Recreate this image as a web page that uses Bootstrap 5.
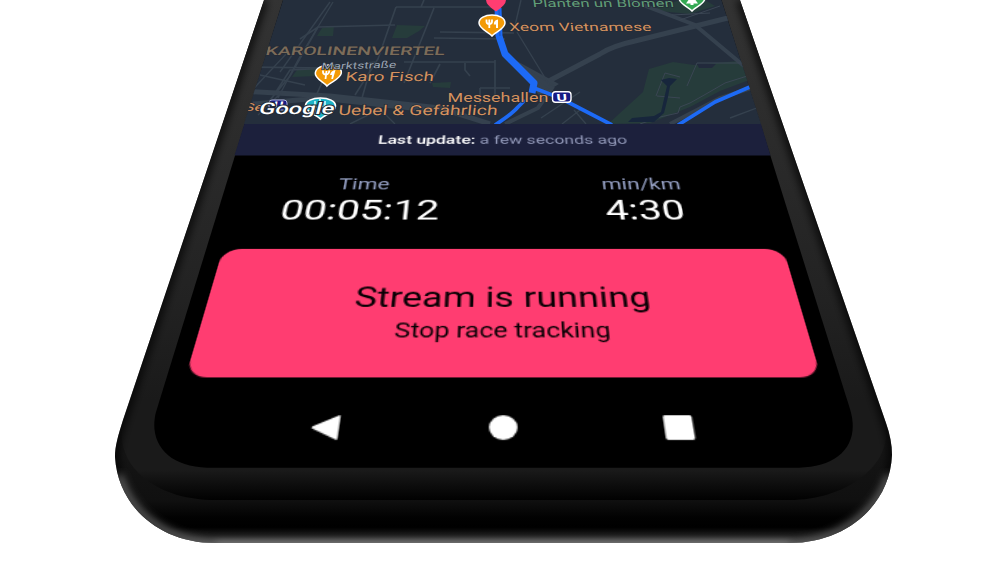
<!DOCTYPE html>
<html lang="en">
<head>
<meta charset="utf-8">
<meta name="viewport" content="width=device-width, initial-scale=1">
<title>Race tracker</title>
<link href="https://cdn.jsdelivr.net/npm/bootstrap@5.3.0/dist/css/bootstrap.min.css" rel="stylesheet">
<style>
body{background:#fff;font-family:Roboto,sans-serif}
.stage{width:1000px;height:562px}
.scene{left:0;top:0}
/* the tilted phone screen: flat layout projected with one perspective matrix */
.screen{width:439px;height:527px;margin-left:283.3px;transform-origin:50% 0;transform:matrix3d(1,0,0,0,0,.533,0,-.000757,0,0,1,0,0,0,0,1)}
.map-space{height:198px}
.update{height:40px;font-size:14.7px;line-height:42px;color:#8f96b6}
.update b{font-weight:500;color:#fff}
.stats{height:107px;padding-top:24px}
.stat-name{font-size:18px;line-height:24px;color:#95a0c4}
.stat-value{font-size:31.6px;line-height:35px;color:#fff}
.stop{width:414px;height:115.5px;padding:5px 0 0;border:0;border-radius:14px;background:#ff3d71;color:#080004}
.stop-title{font-size:26.6px;line-height:32px}
.stop-sub{font-size:18.3px;line-height:27px}
.keys{height:66px;padding:10px 100px 0}
</style>
</head>
<body>
<main class="stage position-relative overflow-hidden">
<svg class="scene position-absolute" width="1000" height="562" viewBox="0 0 1000 562" font-family="Roboto,sans-serif">
  <defs>
    <clipPath id="body"><path d="M264 0L123 420C118 436 115 446 115 457C118 507 160 543 215 543H790C846 543 890 505 892 455C892 445 890 434 886 423L740 0Z"/></clipPath>
    <clipPath id="mapclip"><path d="M283 0H721.500L761 124H244Z"/></clipPath>
    <linearGradient id="rim" x1="0" y1="400" x2="0" y2="543" gradientUnits="userSpaceOnUse"><stop offset="0" stop-color="#1a1a1a"/><stop offset=".7" stop-color="#101010"/><stop offset=".82" stop-color="#020202"/><stop offset=".89" stop-color="#000"/><stop offset=".95" stop-color="#1c1c1c"/><stop offset="1" stop-color="#555"/></linearGradient>
    <linearGradient id="bezel" x1="0" y1="0" x2="0" y2="500" gradientUnits="userSpaceOnUse"><stop offset="0" stop-color="#333"/><stop offset=".6" stop-color="#222"/><stop offset=".8" stop-color="#1a1a1a"/><stop offset=".94" stop-color="#1a1a1a"/><stop offset=".97" stop-color="#0d0d0d"/><stop offset="1" stop-color="#010101"/></linearGradient>
    <filter id="soft" x="-10%" y="-10%" width="120%" height="120%"><feGaussianBlur stdDeviation="4"/></filter>
    <path id="drop" d="M0 10C-3 6-13 3-13-3C-13-8-7-11 0-11S13-8 13-3C13 3 3 6 0 10Z"/>
  </defs>
  <g clip-path="url(#body)">
    <rect width="1000" height="562" fill="url(#rim)"/>
    <path d="M264 0L124 420C112 460 150 500 215 500H790C850 500 896 460 884 423L740 0Z" fill="url(#bezel)"/>
    <path d="M264 0L123 420C118 436 115 446 115 457C118 507 160 543 215 543" fill="none" stroke="#000" stroke-width="6" filter="url(#soft)"/>
    <path d="M790 543C846 543 890 505 892 455C892 445 890 434 886 423L740 0" fill="none" stroke="#000" stroke-width="6" filter="url(#soft)"/>
    <path d="M119 475C130 515 168 541 215 544H790C840 541 878 512 889 475" fill="none" stroke="#888" stroke-width="5" filter="url(#soft)"/>
  </g>
  <path d="M283 0L156 412C148 443 168 467 207 467.700H799C838 467 861 445 850 409L721.500 0Z"/>
  <path d="M244.300 124H761L770.500 155.500H234.500Z" fill="#1c203c"/>
  <g clip-path="url(#mapclip)">
    <rect width="1000" height="124" fill="#242e3c"/>
    <g fill="#263c3b"><path d="M322 28L334 26L333 36H317ZM397 25L425 26L419 31L407 38H392ZM432 83L451 82L450 88L433 87ZM297 70L318 67L316 76L292 77Z"/>
      <path d="M608 124L643 92L649 69L673 62L694 65L760 59V76L720 91L690 107L650 123Z"/><path d="M649 10L690 14L715 6L705 0H680Z"/></g>
    <g fill="none" stroke="#35414e" stroke-width="3">
      <path d="M396 7L378 59L355 95M396 7H496M424 0L421 7M434 8L404 83M404 62H495M375 62L330 68L290 70L272 98M300 39L318 27L395 25M318 27L290 76L270 100M440 32L514 33M434 38L505 39M495 60V96M465 63V70L470 76M480 88H510M480 88V104M250 67L325 68M260 75L305 85M330 65L315 98M372 63L362 98M440 64L430 83" stroke-width="1.700"/>
      <path d="M239 91L330 96L440 108L490 124M253 104L320 98L430 110" stroke-width="5"/>
      <path d="M545 83L600 54Q612 46 635 41L740 15" stroke-width="5"/>
      <path d="M512 60L556 84L540 94Z" fill="#35414e"/>
      <path d="M630 0L695 25L744 66M510 60L552 88L538 108L505 124M670 124L720 98L770 82" stroke-width="4"/>
      <path d="M333 2L298 60L278 98M330 2L280 72M258 115L280 94M244 99L287 53M517 32L550 86M521 0L514 30M541 118L580 92M574 110L586 124M730 118L770 103M350 124L380 109L395 124M580 110L562 124" stroke-width="1.400"/>
    </g>
    <g fill="none" stroke="#3b4654" stroke-width="1"><path d="M656 96L665 73L680 77M687 86L697 63H742M760 72L725 83L706 94L690 103L680 107L678 113L660 117L640 124M657 96L680 98M672 15L710 13M680 20L720 6"/></g>
    <path d="M661 80L669 78L677 79L670 86L668 97L664 113L654 122H628L632 118L654 116L661 112L667 86Z" fill="#17263c"/>
    <path d="M697 64H716L712 68H699Z" fill="#222a3c"/>
    <g fill="none" stroke="#1d6af5" stroke-linejoin="round"><path d="M498 8L499 36L505 54L534 83L532 93" stroke-width="7"/><path d="M499 10L500 36" stroke="#1b52c0" stroke-width="1"/><path d="M525 100L518 107Q512 114 495 125M534 88L560 98L612 125M678 125L715 102L752 86" stroke-width="3.700"/></g>
    <path d="M486 0H506Q506 5 496 11.500Q486 5 486 0Z" fill="#ff3d71"/>
    <g stroke="#fff" stroke-width="1.500"><use href="#drop" x="492" y="26" fill="#f39a06"/><use href="#drop" x="692" y="1" fill="#34a853"/><use href="#drop" transform="translate(328 76) skewX(-6)" fill="#f39a06"/><use href="#drop" transform="translate(320.500 109) scale(1.150 1)" fill="#1db3c8"/></g>
    <path d="M692-5L698 3.500H693.500V5H690.500V3.500H686Z" fill="#fff"/>
    <path d="M486.500 19.500V21.500Q486.500 24 489.300 24Q492 24 492 21.500V19.500M489.300 19.500V28" fill="none" stroke="#fff" stroke-width="1.800"/><path d="M498 19.500V28H496V24.500H493.800Q493.800 20 498 19.500Z" fill="#fff"/>
    <path d="M323 70.500V72Q323 74.500 326 74.500Q329 74.500 329.300 70.500M326.500 71L325.500 79" fill="none" stroke="#fff" stroke-width="1.800"/><path d="M335.500 70L333 79H331.300L332 75H330Q331 70.500 335.500 70Z" fill="#fff"/>
    <path d="M315 101V114M320 99V113M325 101V114M312 107H329" stroke="#e5ffff" stroke-width="1.500"/>
    <rect x="552.500" y="91.800" width="18.500" height="10.500" rx="3" fill="#171b83" stroke="#fff" stroke-width="1.400"/>
    <text transform="matrix(1.600 0 .090 1 562 100.600)" text-anchor="middle" font-size="10" font-weight="700" fill="#fff">U</text>
    <rect x="269" y="100" width="18" height="10" rx="3" fill="#171b83" stroke="#aeb3dc"/>
    <text transform="matrix(1.600 0 -.200 1 278 108)" text-anchor="middle" font-size="9" font-weight="700" fill="#fff">U</text>
    <g fill="#d5925f" stroke="#242a35" stroke-width="1.200" paint-order="stroke" font-size="11.500">
      <text transform="matrix(1.800 0 .110 1 509.500 30.500)" textLength="79" lengthAdjust="spacingAndGlyphs" font-size="11.500">Xeom Vietnamese</text>
      <text transform="matrix(1.800 0 .140 1 533 6.500)" textLength="78.500" lengthAdjust="spacingAndGlyphs" font-size="11" fill="#609d78">Planten un Blomen</text>
      <text transform="matrix(1.700 0 -.190 1 265 54.500)" textLength="105.500" lengthAdjust="spacingAndGlyphs" font-size="12" font-weight="500" fill="#7c6c59">KAROLINENVIERTEL</text>
      <text transform="matrix(1.700 -.040 -.170 1 321 69.500)" textLength="44" lengthAdjust="spacingAndGlyphs" font-size="9.500" fill="#98a4b3">Marktstraße</text>
      <text transform="matrix(1.650 0 -.140 1 345 80.500)" textLength="53.500" lengthAdjust="spacingAndGlyphs" font-size="12.800">Karo Fisch</text>
      <text transform="matrix(1.600 0 0 1 447.500 101.500)" textLength="63" lengthAdjust="spacingAndGlyphs" font-size="12.300">Messehallen</text>
      <text transform="matrix(1.600 0 -.110 1 338 114.500)" textLength="99.500" lengthAdjust="spacingAndGlyphs" font-size="13.800">Uebel &amp; Gefährlich</text>
      <text transform="matrix(1.600 0 -.300 1 243 111)" font-size="11">Se</text>
    </g>
    <text transform="matrix(1.600 0 -.270 1 258 113.500)" textLength="47" lengthAdjust="spacingAndGlyphs" font-size="16" font-weight="500" fill="#fff" stroke="#222b36" stroke-width="2" paint-order="stroke">Google</text>
  </g>
</svg>
<section class="screen position-relative d-flex flex-column">
  <div class="map-space"></div>
  <div class="update text-center"><b>Last update:</b> a few seconds ago</div>
  <div class="stats row g-0 text-center">
    <div class="col-6"><div class="stat-name">Time</div><div class="stat-value">00:05:12</div></div>
    <div class="col-6"><div class="stat-name">min/km</div><div class="stat-value">4:30</div></div>
  </div>
  <button type="button" class="stop align-self-center d-flex flex-column align-items-center justify-content-center"><span class="stop-title">Stream is running</span><span class="stop-sub">Stop race tracking</span></button>
  <div class="keys d-flex justify-content-between align-items-center">
    <svg width="20" height="20" viewBox="0 0 20 20"><path d="M1.500 10L17 1.800V18.200Z" fill="#fff" stroke="#fff" stroke-width="1.500" stroke-linejoin="round"/></svg>
    <svg width="20" height="20" viewBox="0 0 20 20"><circle cx="10" cy="10" r="8.900" fill="#fff"/></svg>
    <svg width="20" height="20" viewBox="0 0 20 20"><rect x="1.300" y="1" width="18" height="18" rx="1.400" fill="#fff"/></svg>
  </div>
</section>
</main>
<script src="https://cdn.jsdelivr.net/npm/bootstrap@5.3.0/dist/js/bootstrap.bundle.min.js"></script>
</body>
</html>
